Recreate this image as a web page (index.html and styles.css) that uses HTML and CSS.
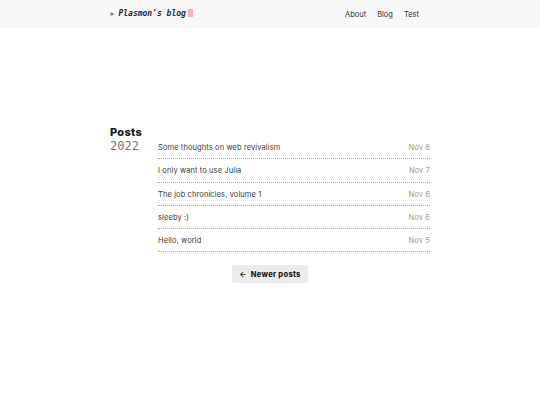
FILE: index.html
```html
<!DOCTYPE html>
<html>
<head>
<meta charset="utf-8">
<link rel="stylesheet" href="styles.css">
</head>
<body>
<header class="topbar">
  <div class="inner">
    <a class="logo" href="#"><span class="prompt">&gt;</span> Plasmon's blog<span class="cursor"></span></a>
    <nav class="nav">
      <a href="#">About</a>
      <a href="#">Blog</a>
      <a href="#">Test</a>
    </nav>
  </div>
</header>
<main class="content">
  <section class="posts">
    <div class="side">
      <h1 class="title">Posts</h1>
      <div class="year">2022</div>
    </div>
    <ul class="list">
      <li class="row"><a href="#">Some thoughts on web revivalism</a><span class="date">Nov 8</span></li>
      <li class="row"><a href="#">I only want to use Julia</a><span class="date">Nov 7</span></li>
      <li class="row"><a href="#">The job chronicles, volume 1</a><span class="date">Nov 6</span></li>
      <li class="row"><a href="#">sleeby :)</a><span class="date">Nov 6</span></li>
      <li class="row"><a href="#">Hello, world</a><span class="date">Nov 5</span></li>
    </ul>
  </section>
  <div class="pager">
    <a class="btn" href="#"><span class="arrow">&larr;</span> Newer posts</a>
  </div>
</main>
</body>
</html>
```
FILE: styles.css
```css
* { box-sizing: border-box; }
html, body { margin: 0; padding: 0; background: #fff; }
body { font-family: Inter, "Noto Sans", sans-serif; color: #333; }
a { color: inherit; text-decoration: none; }

.topbar { background: #f8f8f8; height: 28px; }
.topbar .inner {
  width: 320px; margin: 0 auto; height: 28px;
  display: flex; align-items: center; justify-content: space-between;
}
.logo {
  font-family: "DejaVu Sans Mono", "Liberation Mono", monospace;
  font-style: italic; font-weight: bold; font-size: 8px; color: #2a2a2a;
  white-space: pre; letter-spacing: 0; line-height: 10px;
}
.prompt { font-size: 6px; font-style: normal; }
.cursor { display: inline-block; width: 5px; height: 8px; background: #f2b3c6; margin-left: 2px; vertical-align: -1px; }
.nav { display: flex; gap: 11px; font-size: 7.5px; color: #333; margin-right: 11px; }

.content { width: 320px; margin: 0 auto; padding-top: 98px; }
.posts { display: flex; }
.side { width: 48px; flex: none; }
.title {
  margin: 0; font-size: 11px; font-weight: 800; color: #1a1a1a;
  font-family: Inter, sans-serif; letter-spacing: 0.3px; line-height: 13px;
}
.year {
  font-family: "DejaVu Sans Mono", "Liberation Mono", monospace;
  font-size: 12px; color: #777; line-height: 13px; letter-spacing: 0; margin-top: 1px;
}
.list { list-style: none; margin: 0; padding: 0; flex: 1; margin-top: 10px; }
.row {
  display: flex; justify-content: space-between; align-items: center;
  height: 23.3px; font-size: 7.5px; color: #3a3a3a;
  border-bottom: 1px dotted #aaa;
  padding-top: 1px; letter-spacing: 0.1px;
}
.date { color: #999; }

.pager { display: flex; justify-content: center; margin-top: 13px; }
.btn {
  background: #ececec; border-radius: 3px; font-size: 7.5px; font-weight: 800;
  color: #222; padding: 0 7px; height: 18px; display: flex; align-items: center; gap: 4px;
  letter-spacing: 0.3px;
}
.arrow { font-weight: 700; }
```
